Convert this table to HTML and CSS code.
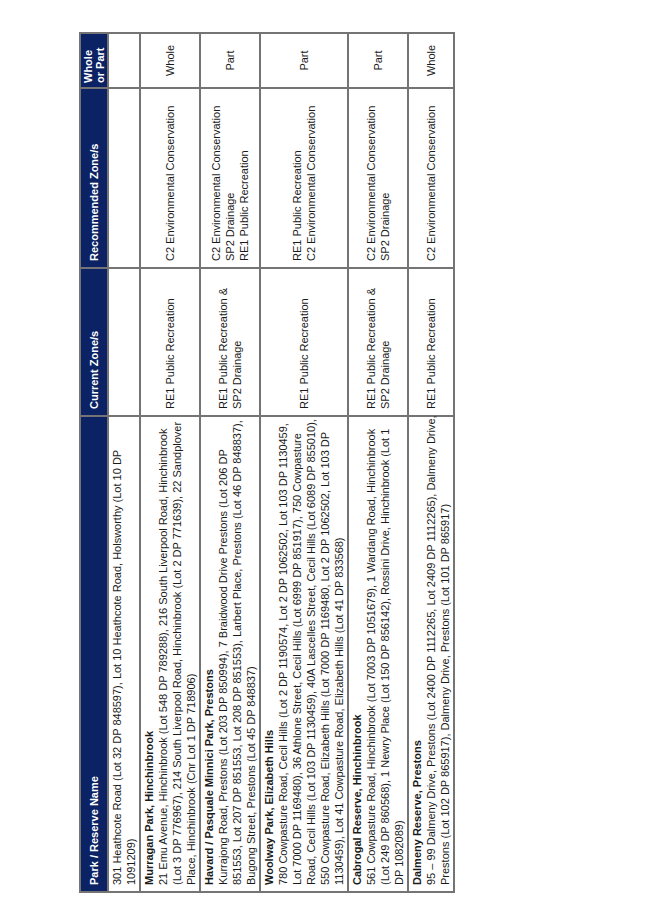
FILE: index.html
```html
<!DOCTYPE html>
<html lang="en">
<head>
<meta charset="utf-8">
<title>Park / Reserve Zones</title>
<link rel="stylesheet" href="styles.css">
</head>
<body>
<div class="page">
  <div class="frame">
    <table class="zones">
      <colgroup>
        <col class="c-name">
        <col class="c-cur">
        <col class="c-rec">
        <col class="c-whole">
      </colgroup>
      <thead>
        <tr class="head">
          <th>Park / Reserve Name</th>
          <th>Current Zone/s</th>
          <th>Recommended Zone/s</th>
          <th class="h-whole">Whole<br>or Part</th>
        </tr>
      </thead>
      <tbody>
        <tr>
          <td class="name">301 Heathcote Road (Lot 32 DP 848597), Lot 10 Heathcote Road, Holsworthy (Lot 10 DP<br>1091209)</td>
          <td class="zone"></td>
          <td class="zone"></td>
          <td class="whole"></td>
        </tr>
        <tr>
          <td class="name"><strong class="site">Murragan Park, Hinchinbrook</strong><br>21 Emu Avenue, Hinchinbrook (Lot 548 DP 789288), 216 South Liverpool Road, Hinchinbrook<br>(Lot 3 DP 776967), 214 South Liverpool Road, Hinchinbrook (Lot 2 DP 771639), 22 Sandplover<br>Place, Hinchinbrook (Cnr Lot 1 DP 718906)</td>
          <td class="zone">RE1 Public Recreation</td>
          <td class="zone">C2 Environmental Conservation</td>
          <td class="whole">Whole</td>
        </tr>
        <tr>
          <td class="name"><strong class="site">Havard / Pasquale Minnici Park, Prestons</strong><br>Kurrajong Road, Prestons (Lot 203 DP 850994), 7 Braidwood Drive Prestons (Lot 206 DP<br>851553, Lot 207 DP 851553, Lot 208 DP 851553), Larbert Place, Prestons (Lot 46 DP 848837),<br>Bugong Street, Prestons (Lot 45 DP 848837)</td>
          <td class="zone">RE1 Public Recreation &amp;<br>SP2 Drainage</td>
          <td class="zone">C2 Environmental Conservation<br>SP2 Drainage<br>RE1 Public Recreation</td>
          <td class="whole">Part</td>
        </tr>
        <tr>
          <td class="name"><strong class="site">Woolway Park, Elizabeth Hills</strong><br>780 Cowpasture Road, Cecil Hills (Lot 2 DP 1190574, Lot 2 DP 1062502, Lot 103 DP 1130459,<br>Lot 7000 DP 1169480), 36 Athlone Street, Cecil Hills (Lot 6999 DP 851917), 750 Cowpasture<br>Road, Cecil Hills (Lot 103 DP 1130459), 40A Lascelles Street, Cecil Hills (Lot 6089 DP 855010),<br>550 Cowpasture Road, Elizabeth Hills (Lot 7000 DP 1169480, Lot 2 DP 1062502, Lot 103 DP<br>1130459), Lot 41 Cowpasture Road, Elizabeth Hills (Lot 41 DP 833568)</td>
          <td class="zone">RE1 Public Recreation</td>
          <td class="zone">RE1 Public Recreation<br>C2 Environmental Conservation</td>
          <td class="whole">Part</td>
        </tr>
        <tr>
          <td class="name"><strong class="site">Cabrogal Reserve, Hinchinbrook</strong><br>561 Cowpasture Road, Hinchinbrook (Lot 7003 DP 1051679), 1 Wardang Road, Hinchinbrook<br>(Lot 249 DP 860568), 1 Newry Place (Lot 150 DP 856142), Rossini Drive, Hinchinbrook (Lot 1<br>DP 1082089)</td>
          <td class="zone">RE1 Public Recreation &amp;<br>SP2 Drainage</td>
          <td class="zone">C2 Environmental Conservation<br>SP2 Drainage</td>
          <td class="whole">Part</td>
        </tr>
        <tr>
          <td class="name"><strong class="site">Dalmeny Reserve, Prestons</strong><br>95 – 99 Dalmeny Drive, Prestons (Lot 2400 DP 1112265, Lot 2409 DP 1112265), Dalmeny Drive,<br>Prestons (Lot 102 DP 865917), Dalmeny Drive, Prestons (Lot 101 DP 865917)</td>
          <td class="zone">RE1 Public Recreation</td>
          <td class="zone">C2 Environmental Conservation</td>
          <td class="whole">Whole</td>
        </tr>
      </tbody>
    </table>
  </div>
</div>
</body>
</html>
```

FILE: styles.css
```css
html, body {
  margin: 0;
  padding: 0;
  background: #ffffff;
  overflow: hidden;
}

.page {
  width: 653px;
  height: 924px;
  box-sizing: border-box;
  padding-top: 34px;
  padding-left: 79px;
}

.frame {
  width: 373px;
  height: 859px;
}

.zones {
  width: 859px;
  table-layout: fixed;
  border-collapse: collapse;
  transform-origin: 0 0;
  transform: translateY(859px) rotate(-90deg);
  font-family: "Liberation Sans", Arial, sans-serif;
  font-size: 11px;
  line-height: 14px;
  color: #1a1a1a;
}

.c-name { width: 476px; }
.c-cur { width: 148px; }
.c-rec { width: 180px; }
.c-whole { width: 55px; }

.zones th,
.zones td {
  border: 2px solid #747474;
  padding: 1px 5px 1px 6px;
  white-space: nowrap;
  text-align: left;
}

.head th {
  height: 26px;
  background: #0b2265;
  color: #ffffff;
  font-weight: bold;
  vertical-align: middle;
  padding-top: 0;
  padding-bottom: 0;
}

.head .h-whole {
  line-height: 12px;
  padding-left: 4px;
  padding-right: 2px;
}

.name {
  vertical-align: top;
}

.site {
  font-weight: bold;
}

.zone {
  vertical-align: middle;
}

.whole {
  vertical-align: middle;
  text-align: center;
}

.zones td.whole {
  text-align: center;
  padding-left: 2px;
  padding-right: 2px;
}
```
